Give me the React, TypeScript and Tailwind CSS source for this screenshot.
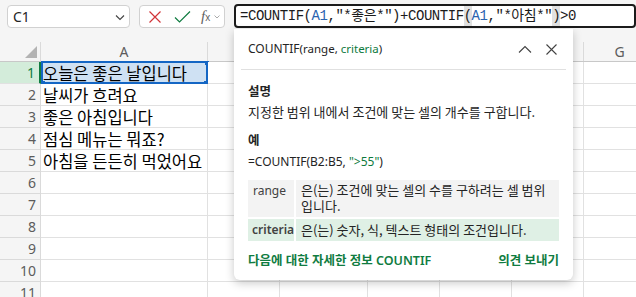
const UI = "font-['Noto_Sans','Noto_Sans_CJK_KR',sans-serif]";
const KR = "font-['Noto_Sans_CJK_KR',sans-serif]";

const cols = [
  { id: "A", cls: "w-[167px]" },
  { id: "B", cls: "w-[72px]" },
  { id: "C", cls: "w-[88px]" },
  { id: "D", cls: "w-[72px]" },
  { id: "E", cls: "w-[72px]" },
  { id: "F", cls: "w-[72px]" },
  { id: "G", cls: "w-[72px]" },
];

const cells: Record<number, string> = {
  1: "오늘은 좋은 날입니다",
  2: "날씨가 흐려요",
  3: "좋은 아침입니다",
  4: "점심 메뉴는 뭐죠?",
  5: "아침을 든든히 먹었어요",
};

function Toolbar() {
  return (
    <div className="flex items-start h-[42px] pt-[4px]">
      <div className="ml-[7px] mt-[1px] flex h-[23px] w-[123px] shrink-0 items-center justify-between rounded-[4px] border border-[#d1d1d1] bg-white pl-[5px] pr-[3px]">
        <span className={`${UI} text-[14px] text-[#242424]`}>C1</span>
        <svg width="12" height="12" viewBox="0 0 12 12" fill="none" stroke="#424242" strokeWidth="1.1">
          <path d="M2 4.5 6 8.5 10 4.5" />
        </svg>
      </div>
      <div className="ml-[9px] mt-[1px] flex h-[23px] w-[86px] shrink-0 items-center rounded-[4px] border border-[#d1d1d1] bg-white">
        <svg className="ml-[8px]" width="14" height="14" viewBox="0 0 14 14" fill="none" stroke="#d13438" strokeWidth="1.2">
          <path d="M1.5 1.5 12.5 12.5M12.5 1.5 1.5 12.5" />
        </svg>
        <svg className="ml-[12px]" width="17" height="14" viewBox="0 0 17 14" fill="none" stroke="#107c41" strokeWidth="1.2">
          <path d="M1 7.5 5.5 12 16 1.5" />
        </svg>
        <span className="ml-[10px] flex items-baseline text-[#616161]">
          <span className="font-['Liberation_Serif',serif] italic text-[15px] leading-none">f</span>
          <span className="font-['Liberation_Sans',sans-serif] text-[10px] leading-none">x</span>
        </span>
        <svg className="ml-[4px]" width="6" height="6" viewBox="0 0 6 6" fill="none" stroke="#a0a0a0" strokeWidth="0.9">
          <path d="M0.5 1.5 3 4 5.5 1.5" />
        </svg>
      </div>
      <div className="ml-[9px] flex h-[24px] flex-1 items-stretch rounded-[4px] border-2 border-[#1b1b1b] bg-white pl-[4px] font-['Liberation_Mono','Noto_Sans_CJK_KR',monospace] text-[14px] leading-[20px] tracking-[-0.45px] text-[#1b1b1b] whitespace-nowrap">
        <span>=COUNTIF(</span>
        <span className="text-[#2a63b0]">A1</span>
        <span>,"*좋은*")+COUNTIF</span>
        <span className="bg-[#e1e1e1]">(</span>
        <span className="text-[#2a63b0]">A1</span>
        <span>,"*아침*"</span>
        <span className="bg-[#e1e1e1]">)</span>
        <span>&gt;0</span>
      </div>
    </div>
  );
}

function Grid() {
  return (
    <div>
      <div className="flex h-[20px] border-b border-[#c8c8c8]">
        <div className="relative w-[41px] shrink-0 border-r border-[#dadada]">
          <svg className="absolute right-[3px] bottom-[3px]" width="12" height="12" viewBox="0 0 12 12">
            <path d="M12 0 12 12 0 12Z" fill="#b3b3b3" />
          </svg>
        </div>
        {cols.map((c) => (
          <div
            key={c.id}
            className={`${c.cls} shrink-0 border-r border-[#dadada] text-center ${UI} text-[14px] leading-[20px] text-[#5c5c5c]`}
          >
            {c.id}
          </div>
        ))}
      </div>
      {Array.from({ length: 11 }, (_, i) => i + 1).map((r) => (
        <div key={r} className="flex h-[22px]">
          <div
            className={`w-[41px] shrink-0 pr-[4px] text-right ${UI} text-[14px] leading-[22px] ${
              r === 1
                ? "border-r-2 border-b border-r-[#107c41] border-b-[#e1e1e1] bg-[#d3ecda] text-[#107c41]"
                : "border-r border-b border-[#dadada] bg-[#f5f5f5] text-[#5c5c5c]"
            }`}
          >
            {r}
          </div>
          {cols.map((c, ci) => (
            <div
              key={c.id}
              className={`${c.cls} relative shrink-0 border-r border-b border-[#e1e1e1] ${
                r === 1 && ci === 0 ? "bg-[#cfe1f3]" : "bg-white"
              }`}
            >
              {ci === 0 && cells[r] && (
                <span
                  className={`absolute left-[2px] top-0 ${KR} text-[16.5px] leading-[22px] text-black whitespace-nowrap`}
                >
                  {cells[r]}
                </span>
              )}
              {r === 1 && ci === 0 && (
                <div className="absolute -top-[1px] left-0 -right-[1px] -bottom-[1px] border-2 border-[#1466c4]">
                  <div className="absolute -right-[3px] -top-[2px] h-[4px] w-[4px] bg-[#1466c4]" />
                  <div className="absolute -right-[3px] -bottom-[4px] h-[5px] w-[5px] bg-[#1466c4]" />
                  <div className="absolute -left-[2px] -bottom-[3px] h-[4px] w-[4px] bg-[#1466c4]" />
                </div>
              )}
            </div>
          ))}
        </div>
      ))}
    </div>
  );
}

function Popup() {
  return (
    <div className={`absolute left-[234px] top-[29px] h-[251px] w-[339px] rounded-b-[6px] bg-white shadow-[0_3px_10px_rgba(0,0,0,0.22)] ${UI} text-[#242424]`}>
      <div className="flex h-[40px] items-center justify-between pl-[14px] pr-[16px]">
        <div className="text-[11.5px]">
          <span className="text-[12px]">COUNTIF</span>
          <span>(range,&nbsp;</span>
          <span className="text-[#0e7a3d]">criteria</span>
          <span>)</span>
        </div>
        <div className="flex items-center gap-[14px]">
          <svg width="14" height="8" viewBox="0 0 14 8" fill="none" stroke="#424242" strokeWidth="1.1">
            <path d="M1 7.5 7 1.5 13 7.5" />
          </svg>
          <svg width="11" height="11" viewBox="0 0 11 11" fill="none" stroke="#424242" strokeWidth="1.1">
            <path d="M0.5 0.5 10.5 10.5M10.5 0.5 0.5 10.5" />
          </svg>
        </div>
      </div>
      <div className="mx-[7px] h-px bg-[#e0e0e0]" />
      <div className="px-[14px] pt-[13px]">
        <div className={`${KR} text-[12.5px] font-bold leading-[16px]`}>설명</div>
        <div className={`${KR} mt-[5px] text-[13px] leading-[16px]`}>
          지정한 범위 내에서 조건에 맞는 셀의 개수를 구합니다.
        </div>
        <div className={`${KR} mt-[12px] text-[12.5px] font-bold leading-[16px]`}>예</div>
        <div className="mt-[6px] text-[12px] leading-[16px]">
          <span>=COUNTIF(B2:B5,&nbsp;</span>
          <span className="text-[#0e7a3d]">"&gt;55"</span>
          <span>)</span>
        </div>
        <div className="mt-[10px] flex flex-col gap-[2px] text-[12px]">
          <div className="flex h-[37px] bg-[#f3f3f3]">
            <div className="w-[48px] shrink-0 border-r-2 border-white pl-[5px] pt-[3px] leading-[16px] text-[#424242]">
              range
            </div>
            <div className={`${KR} pl-[5px] pt-[2px] text-[13px] leading-[16px]`}>
              <div>은(는) 조건에 맞는 셀의 수를 구하려는 셀 범위</div>
              <div>입니다.</div>
            </div>
          </div>
          <div className="flex h-[22px] items-center bg-[#dff0e5]">
            <div className="flex h-full w-[48px] shrink-0 items-center border-r-2 border-white pl-[4px] font-semibold text-[#424242]">
              criteria
            </div>
            <div className={`${KR} pl-[5px] text-[13px]`}>은(는) 숫자, 식, 텍스트 형태의 조건입니다.</div>
          </div>
        </div>
        <div className="mt-[12px] flex justify-between text-[12.5px] font-semibold leading-[16px] text-[#107c41]">
          <span>다음에 대한 자세한 정보 COUNTIF</span>
          <span>의견 보내기</span>
        </div>
      </div>
    </div>
  );
}

export default function App() {
  return (
    <div className="relative h-[297px] w-[636px] overflow-hidden bg-[#f5f5f5]">
      <Toolbar />
      <Grid />
      <Popup />
    </div>
  );
}
